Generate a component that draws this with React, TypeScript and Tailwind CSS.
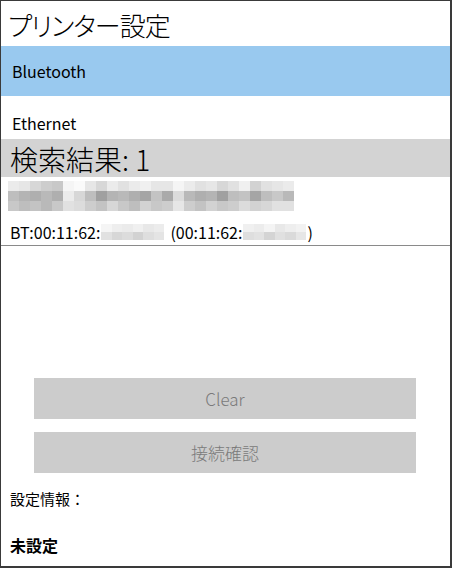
import React from "react";

const row1 = [235,230,215,205,200,245,250,230,215,235,225,235,240,230,230,245,235,225,230,215,225,240,210,225,230,235];
const row2 = [190,180,175,185,175,235,215,190,160,180,185,175,165,195,170,220,185,175,180,160,190,195,165,190,200,185];
const row3 = [200,190,195,185,200,225,220,205,195,215,200,190,210,200,205,230,205,195,210,200,205,220,210,215,225,225];

const g = (v: number) => `rgb(${v},${v},${v})`;

function Mosaic({ rows, w, h }: { rows: number[][]; w: number; h: number }) {
  return (
    <div className="flex flex-col">
      {rows.map((r, i) => (
        <div key={i} className="flex">
          {r.map((v, j) => (
            <div key={j} style={{ width: w, height: h, background: g(v) }} />
          ))}
        </div>
      ))}
    </div>
  );
}

const addr1 = [
  [245, 238, 235, 240, 232, 236],
  [225, 215, 220, 210, 222, 228],
];
const addr2 = [
  [240, 236, 244, 232, 238, 242],
  [222, 226, 212, 224, 218, 230],
];

export default function App() {
  return (
    <div
      className="w-[452px] h-[568px] bg-white border-l border-t border-r-2 border-b-2 border-[#3a3a3a] flex flex-col text-black overflow-hidden"
      style={{ fontFamily: '"Noto Sans CJK JP", "Noto Sans", sans-serif' }}
    >
      <div className="h-[45px] flex items-center pl-[7px] pt-[2px] text-[26px] leading-none font-light tracking-[-1px] [font-feature-settings:'palt']">
        プリンター設定
      </div>
      <div className="h-[50px] bg-[#99c9ef] flex items-center pl-[11px] text-[16px]">
        Bluetooth
      </div>
      <div className="h-[43px] flex items-center pt-[10px] pl-[11px] text-[16px]">
        Ethernet
      </div>
      <div className="h-[38px] bg-[#d3d3d3] flex items-center pl-[9px] pt-[2px] text-[28px] leading-none font-light">
        検索結果: 1
      </div>
      <div className="pt-[4px] pl-[7px]">
        <Mosaic rows={[row1, row2, row3]} w={11} h={10} />
      </div>
      <div className="h-[31px] flex items-center pt-[10px] pl-[9px] text-[16px] leading-none whitespace-nowrap">
        <span>BT:00:11:62:</span>
        <span className="mx-[1px]">
          <Mosaic rows={addr1} w={10.5} h={8} />
        </span>
        <span className="ml-[5px]">(00:11:62:</span>
        <span className="mx-[1px]">
          <Mosaic rows={addr2} w={10.5} h={8} />
        </span>
        <span>)</span>
      </div>
      <div className="h-[1px] bg-[#8a8a8a] mt-[3px]" />
      <div className="flex-1 flex flex-col items-center justify-end">
        <div className="flex flex-col gap-[13px] w-[382px] ml-[-1px]">
          <div className="h-[41px] bg-[#cccccc] flex items-center justify-center text-[17px] text-[#7a7a7a] font-light">
            Clear
          </div>
          <div className="h-[41px] bg-[#cccccc] flex items-center justify-center text-[17px] text-[#7a7a7a] font-light">
            接続確認
          </div>
        </div>
      </div>
      <div className="h-[51px] flex items-center pt-[1px] pl-[9px] text-[15px]">
        設定情報：
      </div>
      <div className="h-[42px] flex items-start pt-[9px] pl-[9px] text-[16px] font-bold">
        未設定
      </div>
    </div>
  );
}
